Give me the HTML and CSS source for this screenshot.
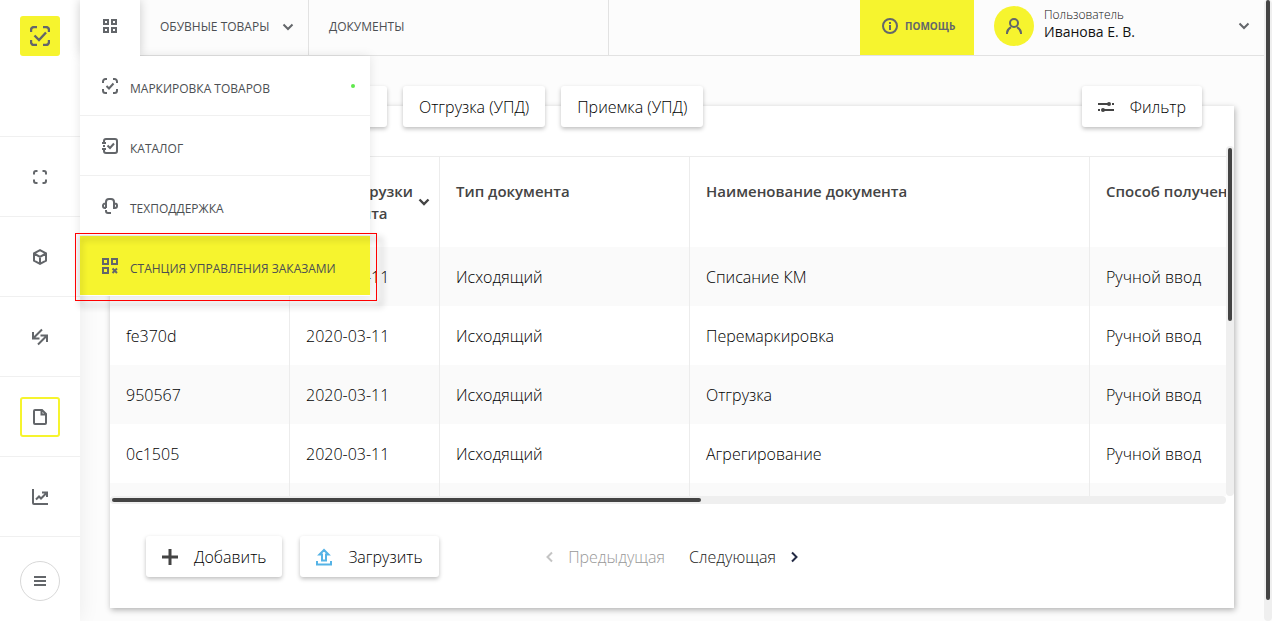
FILE: index.html
```html
<!DOCTYPE html>
<html lang="ru">
<head>
<meta charset="utf-8">
<title>Документы</title>
<link rel="stylesheet" href="styles.css">
</head>
<body>
<div class="app">
  <aside class="sidebar">
    <div class="side-brand">
      <a href="#" class="brand" aria-label="Главная">
        <svg width="20" height="20" viewBox="0 0 20 20" class="ico bold"><path d="M1 6V4a3 3 0 0 1 3-3h3M13 1h3a3 3 0 0 1 3 3v2M19 14v2a3 3 0 0 1-3 3h-3M7 19H4a3 3 0 0 1-3-3v-2" /><path d="M4.500 9.500l4.500 4.500 7-7.500"/></svg>
      </a>
    </div>
    <nav class="side-nav">
      <a href="#" class="side-link" aria-label="Коды"><span class="side-icon"><svg width="16" height="16" viewBox="0 0 16 16" class="ico"><path d="M2 5.500V4a2 2 0 0 1 2-2h1.500M10.500 2H12a2 2 0 0 1 2 2v1.500M14 10.500V12a2 2 0 0 1-2 2h-1.500M5.500 14H4a2 2 0 0 1-2-2v-1.500"/></svg></span></a>
      <a href="#" class="side-link" aria-label="Товары"><span class="side-icon"><svg width="16" height="16" viewBox="0 0 16 16" class="ico"><path d="M8 1.200l6 3.200v7.200L8 14.800l-6-3.200V4.400zM2 4.500l6 3.300 6-3.300M8 7.800V15"/></svg></span></a>
      <a href="#" class="side-link" aria-label="Обмен"><span class="side-icon"><svg width="18" height="18" viewBox="0 0 18 18" class="ico"><path d="M11 1.500L3 9.500M2 4v6.500h6.500M7 16.500l8-8M9.500 7.500H16V14"/></svg></span></a>
      <a href="#" class="side-link active" aria-label="Документы"><span class="side-icon"><svg width="16" height="16" viewBox="0 0 16 16" class="ico"><path d="M3 1h7l4 4v9a1 1 0 0 1-1 1H3a1 1 0 0 1-1-1V2a1 1 0 0 1 1-1zM9.500 1v4.500H14"/></svg></span></a>
      <a href="#" class="side-link" aria-label="Отчёты"><span class="side-icon"><svg width="16" height="16" viewBox="0 0 16 16" class="ico"><path d="M1 0v14a1 1 0 0 0 1 1h14M4 10.500l3-3 2 2 5.500-5.500M10 3.500h5v4.500"/></svg></span></a>
    </nav>
    <button class="side-menu" aria-label="Меню"><svg width="12" height="12" viewBox="0 0 12 12" class="ico"><path d="M0 2h12M0 6h12M0 10h12"/></svg></button>
  </aside>

  <div class="main">
    <header class="topbar">
      <div class="apps">
        <button class="apps-button" aria-label="Приложения"><svg width="14" height="14" viewBox="0 0 14 14" class="ico"><path d="M1 1h4v4H1zM9 1h4v4H9zM1 9h4v4H1zM9 9h4v4H9z"/></svg></button>
        <nav class="apps-menu">
          <a href="#" class="menu-item"><svg width="16" height="16" viewBox="0 0 16 16" class="ico"><path d="M1 5V3.500A2.500 2.500 0 0 1 3.500 1H5M11 1h1.500A2.500 2.500 0 0 1 15 3.500V5M15 11v1.500a2.500 2.500 0 0 1-2.500 2.500H11M5 15H3.500A2.500 2.500 0 0 1 1 12.500V11M4.500 8l2.500 2.500 4.500-5"/></svg><span>Маркировка товаров</span><i class="dot"></i></a>
          <a href="#" class="menu-item"><svg width="16" height="16" viewBox="0 0 16 16" class="ico"><path d="M2 4V3a2 2 0 0 1 2-2h9a2 2 0 0 1 2 2v10a2 2 0 0 1-2 2H4a2 2 0 0 1-2-2v-1M2 7v2M0 5h4M0 11h4M5.500 7.500L8 10l4-4.500"/></svg><span>Каталог</span></a>
          <a href="#" class="menu-item"><svg width="16" height="16" viewBox="0 0 16 16" class="ico"><path d="M4 10V4a3 3 0 0 1 3-3h2a3 3 0 0 1 3 3v6h1a2 2 0 0 0 2-2V7.500A2 2 0 0 0 13 5.500h-1M4 10H3a2 2 0 0 1-2-2V7.500a2 2 0 0 1 2-2h1M4 12v1a2 2 0 0 0 2 2h3"/></svg><span>Техподдержка</span></a>
          <a href="#" class="menu-item selected"><svg width="16" height="16" viewBox="0 0 16 16" class="ico"><path d="M1 1h5v5H1zM10 1h5v5h-5zM1 10h5v5H1zM10.500 10.500l4.500 4.500M15 10.500L10.500 15"/></svg><span>Станция управления заказами</span></a>
          <div class="highlight"></div>
        </nav>
      </div>
      <button class="top-item group">Обувные товары<svg width="12" height="8" viewBox="0 0 12 8" class="ico"><path d="M1.500 1.500L6 6l4.500-4.500"/></svg></button>
      <a href="#" class="top-item section">Документы</a>
      <a href="#" class="help"><svg width="16" height="16" viewBox="0 0 16 16" class="ico"><circle cx="8" cy="8" r="7"/><path d="M8 7v5M8 4v2"/></svg>Помощь</a>
      <button class="user">
        <span class="avatar"><svg width="16" height="16" viewBox="0 0 16 16" class="ico"><circle cx="8" cy="5" r="4"/><path d="M1 16v-1c0-3 2-4.500 4-5.800M15 16v-1c0-3-2-4.500-4-5.800"/></svg></span>
        <span class="user-text"><span class="role">Пользователь</span><span class="name">Иванова Е. В.</span></span>
        <svg width="12" height="8" viewBox="0 0 12 8" class="ico"><path d="M1.500 1.500L6 6l4.500-4.500"/></svg>
      </button>
    </header>

    <main class="content">
      <section class="card">
        <div class="toolbar">
          <div class="btn wide"></div>
          <button class="btn">Отгрузка (УПД)</button>
          <button class="btn">Приемка (УПД)</button>
          <button class="btn filter"><svg width="16" height="12" viewBox="0 0 16 12"><path d="M0 3h12M4 9h12M14 3h2M0 9h2" fill="none" stroke="#444" stroke-width="2"/><circle cx="11" cy="3" r="2" fill="#444"/><circle cx="5" cy="9" r="2" fill="#444"/></svg>Фильтр</button>
        </div>
        <div class="grid">
          <div class="viewport">
            <table class="docs">
              <colgroup><col class="c-num"><col class="c-date"><col class="c-type"><col class="c-name"><col class="c-way"></colgroup>
              <thead>
                <tr>
                  <th></th>
                  <th><div class="sortable">Дата загрузки документа<svg width="12" height="8" viewBox="0 0 12 8" class="ico dark"><path d="M1.500 1.500L6 6l4.500-4.500"/></svg></div></th>
                  <th>Тип документа</th><th>Наименование документа</th><th>Способ получения</th>
                </tr>
              </thead>
              <tbody>
                <tr><td></td><td>2020-03-11</td><td>Исходящий</td><td>Списание КМ</td><td>Ручной ввод</td></tr>
                <tr><td>fe370d</td><td>2020-03-11</td><td>Исходящий</td><td>Перемаркировка</td><td>Ручной ввод</td></tr>
                <tr><td>950567</td><td>2020-03-11</td><td>Исходящий</td><td>Отгрузка</td><td>Ручной ввод</td></tr>
                <tr><td>0c1505</td><td>2020-03-11</td><td>Исходящий</td><td>Агрегирование</td><td>Ручной ввод</td></tr>
                <tr><td></td><td></td><td></td><td></td><td></td></tr>
              </tbody>
            </table>
          </div>
          <div class="track vertical"><div class="thumb"></div></div>
          <div class="track horizontal"><div class="thumb"></div></div>
        </div>
        <footer class="card-footer">
          <div class="actions">
            <button class="btn"><svg width="16" height="16" viewBox="0 0 16 16"><path d="M8 0v16M0 8h16" stroke="#444" stroke-width="3"/></svg>Добавить</button>
            <button class="btn"><svg width="16" height="18" viewBox="0 0 16 18"><path d="M8 2L3.500 6.500H6v6h4v-6h2.500zM1 13v3.500h14V13" fill="none" stroke="#55b3e6" stroke-width="2"/></svg>Загрузить</button>
          </div>
          <nav class="pager">
            <button class="page prev" disabled><svg width="8" height="12" viewBox="0 0 8 12"><path d="M6 1.500L1.500 6 6 10.500"/></svg>Предыдущая</button>
            <button class="page next">Следующая<svg width="8" height="12" viewBox="0 0 8 12"><path d="M2 1.500L6.500 6 2 10.500"/></svg></button>
          </nav>
        </footer>
      </section>
    </main>
  </div>
  <div class="track page-track"><div class="thumb"></div></div>
</div>
</body>
</html>
```
FILE: styles.css
```css
* { box-sizing: border-box; }
body {
  margin: 0;
  font: 300 16px/22px "Open Sans", "Noto Sans", sans-serif;
  color: #000;
  background: #fcfcfc;
}
button { font: inherit; color: inherit; border: 0; padding: 0; background: none; cursor: pointer; }
a { color: inherit; text-decoration: none; }
svg { display: block; flex: none; }
.ico { fill: none; stroke: #63666a; stroke-width: 2; }
.ico.bold { stroke-width: 2.4; }
.ico.dark { stroke: #444; stroke-width: 2.4; }

.app { display: flex; height: 100vh; min-height: 560px; overflow: hidden; }

.sidebar {
  position: relative;
  z-index: 1;
  width: 80px;
  flex: none;
  display: flex;
  flex-direction: column;
  align-items: center;
  background: #fff;
  box-shadow: 0 0 20px rgba(0, 0, 0, .07);
}
.side-brand { width: 100%; height: 137px; padding: 16px 20px; border-bottom: 1px solid #f0f0f0; }
.brand {
  display: grid;
  place-items: center;
  width: 40px;
  height: 40px;
  border-radius: 3px;
  background: #f6f42e;
}
.side-nav { width: 100%; }
.side-link {
  display: grid;
  place-items: center;
  height: 80px;
  border-bottom: 1px solid #f0f0f0;
}
.side-icon { display: grid; place-items: center; width: 40px; height: 40px; border-radius: 3px; }
.active .side-icon { border: 2px solid #f6f42e; }
.side-menu {
  display: grid;
  place-items: center;
  width: 40px;
  height: 40px;
  margin-top: 24px;
  border: 1px solid #d8d8d8;
  border-radius: 50%;
}

.main { flex: 1; min-width: 0; display: flex; flex-direction: column; }
.topbar {
  position: relative;
  z-index: 2;
  display: flex;
  height: 56px;
  flex: none;
  border-bottom: 1px solid #e2e2e2;
  background: #fcfcfc;
  font-size: 12px;
  font-weight: 500;
  color: #4c4f53;
}
.apps { position: relative; width: 60px; box-shadow: 0 0 10px rgba(0, 0, 0, .2); }
.apps-button { position: relative; z-index: 1; display: grid; place-items: center; width: 60px; height: 56px; padding-bottom: 4px; background: #fff; }
.apps-menu {
  position: absolute;
  top: 56px;
  left: 0;
  width: 290px;
  background: #fff;
  box-shadow: 0 0 10px rgba(0, 0, 0, .1);
}
.menu-item {
  display: flex;
  align-items: center;
  gap: 12px;
  height: 60px;
  padding: 0 15px 0 22px;
  border-bottom: 1px solid #f0f0f0;
  text-transform: uppercase;
}
.menu-item span { padding-top: 6px; }
.menu-item.selected { background: #f6f42e; border-color: #fff; }
.dot { width: 4px; height: 4px; margin-left: auto; border-radius: 50%; background: #5fe84c; }
.highlight {
  position: absolute;
  inset: 177px -7px -5px -5px;
  border: 1px solid #f00;
  filter: drop-shadow(5px 5px 3px rgba(0, 0, 0, .45));
  pointer-events: none;
}
.top-item {
  display: flex;
  align-items: center;
  justify-content: space-between;
  padding: 0 14px 2px 20px;
  border-right: 1px solid #e2e2e2;
  text-transform: uppercase;
}
.group { width: 169px; }
.section { width: 300px; }
.help {
  display: flex;
  align-items: center;
  gap: 7px;
  margin-left: auto;
  width: 114px;
  padding: 0 0 3px 22px;
  background: #f6f42e;
  color: #63666a;
  font-size: 10px;
  font-weight: 700;
  text-transform: uppercase;
}
.user { display: flex; align-items: center; gap: 10px; width: 290px; padding: 0 14px 3px 20px; text-align: left; }
.user > .ico { margin-left: auto; }
.avatar { display: grid; place-items: center; width: 40px; height: 40px; border-radius: 50%; background: #f6f42e; }
.user-text { display: flex; flex-direction: column; padding-bottom: 4px; color: #111; }
.role { font-weight: 300; line-height: 16px; }
.name { font-size: 14px; line-height: 18px; }

.content { flex: 1; min-height: 0; display: flex; padding: 50px 30px 13px; }
.card {
  flex: 1;
  min-width: 0;
  display: flex;
  flex-direction: column;
  background: #fff;
  box-shadow: 1px 2px 6px rgba(0, 0, 0, .3);
}
.toolbar { display: flex; gap: 16px; height: 40px; flex: none; padding: 0 32px 0 36px; }
.toolbar .btn { margin-top: -20px; }
.btn {
  display: flex;
  align-items: center;
  justify-content: center;
  gap: 16px;
  height: 41px;
  padding: 1px 16px 0;
  border-radius: 3px;
  background: #fff;
  color: #000;
  box-shadow: 0 2px 4px rgba(0, 0, 0, .25);
}
.wide { width: 241px; }
.filter { margin-left: auto; }

.grid { flex: 1; min-height: 0; display: grid; grid-template: minmax(0, 1fr) 8px / minmax(0, 1fr) 8px; }
.viewport { overflow: hidden; padding-top: 10px; }
.docs { width: 1380px; table-layout: fixed; border-collapse: separate; border-spacing: 0; border-top: 1px solid #ececec; }
.c-num { width: 180px; }
.c-date { width: 150px; }
.c-type { width: 250px; }
.c-name, .c-way { width: 400px; }
.docs th, .docs td { padding: 0 16px; border-right: 1px solid #ececec; text-align: left; }
.docs th { height: 90px; padding-top: 23px; vertical-align: top; font-size: 15px; font-weight: 600; color: #444; }
.docs td { height: 59px; padding-top: 1px; }
.docs tbody tr:nth-child(odd) { background: #fafafa; }
.docs th:nth-child(2) { padding-right: 9px; }
.sortable { display: flex; align-items: center; justify-content: space-between; }

.track { border-radius: 4px; background: #efefef; padding: 2px; }
.thumb { border-radius: 2px; background: #444; }
.vertical .thumb { height: 50%; }
.horizontal .thumb { width: 53%; height: 4px; }
.page-track { width: 8px; flex: none; padding-top: 0; }
.page-track .thumb { height: 97%; }

.card-footer {
  display: grid;
  grid-template-columns: 1fr auto 1fr;
  align-items: center;
  height: 104px;
  flex: none;
  padding: 0 36px;
}
.actions { display: flex; gap: 18px; }
.pager { display: flex; gap: 24px; padding-top: 2px; }
.page { display: flex; align-items: center; gap: 14px; color: #222; }
.page svg { fill: none; stroke: #232a45; stroke-width: 2; }
.prev { color: #999; }
.prev svg { stroke: #c4c4c4; }
```
